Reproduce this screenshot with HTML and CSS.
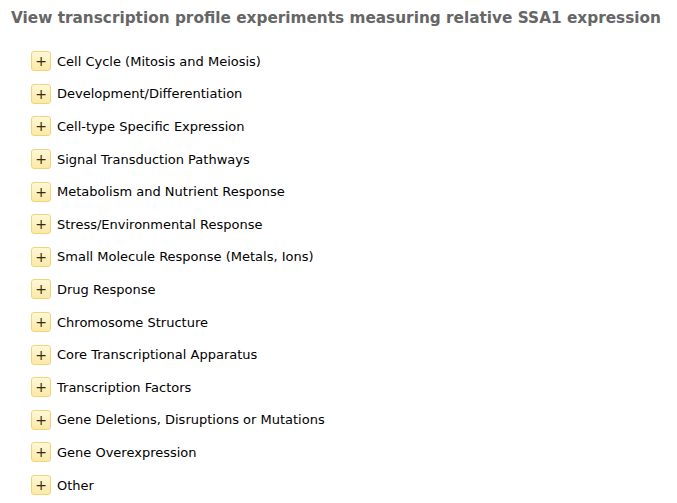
FILE: index.html
```html
<!DOCTYPE html>
<html lang="en">
<head>
  <meta charset="UTF-8" />
  <title>SSA1 expression</title>
  <link rel="stylesheet" href="styles.css">
</head>
<body>
  <h2 class="title">View transcription profile experiments measuring relative SSA1 expression</h2>

  <ul class="categories">
    <li><span class="toggle">+</span>Cell Cycle (Mitosis and Meiosis)</li>
    <li><span class="toggle">+</span>Development/Differentiation</li>
    <li><span class="toggle">+</span>Cell-type Specific Expression</li>
    <li><span class="toggle">+</span>Signal Transduction Pathways</li>
    <li><span class="toggle">+</span>Metabolism and Nutrient Response</li>
    <li><span class="toggle">+</span>Stress/Environmental Response</li>
    <li><span class="toggle">+</span>Small Molecule Response (Metals, Ions)</li>
    <li><span class="toggle">+</span>Drug Response</li>
    <li><span class="toggle">+</span>Chromosome Structure</li>
    <li><span class="toggle">+</span>Core Transcriptional Apparatus</li>
    <li><span class="toggle">+</span>Transcription Factors</li>
    <li><span class="toggle">+</span>Gene Deletions, Disruptions or Mutations</li>
    <li><span class="toggle">+</span>Gene Overexpression</li>
    <li><span class="toggle">+</span>Other</li>
  </ul>
</body>
</html>
```

FILE: styles.css
```css
* {
  box-sizing: border-box;
}

html, body {
  margin: 0;
  padding: 0;
  background: #ffffff;
  font-family: 'DejaVu Sans', Verdana, sans-serif;
}

body {
  padding: 9px 0 0 11px;
}

.title {
  margin: 0;
  font-size: 15.3px;
  line-height: 19px;
  font-weight: bold;
  color: #666666;
}

.categories {
  list-style: none;
  margin: 0;
  padding: 17px 0 0 20px;
}

.categories li {
  display: flex;
  align-items: center;
  gap: 6px;
  height: 32.6px;
  font-size: 13px;
  color: #000000;
}

.toggle {
  display: flex;
  align-items: center;
  justify-content: center;
  width: 20px;
  height: 20px;
  border: 1px solid #f3d37a;
  border-radius: 3px;
  background: linear-gradient(#fff8d8, #fbe9a6);
  font-size: 14px;
  line-height: 1;
  color: #3a2a10;
}
```
